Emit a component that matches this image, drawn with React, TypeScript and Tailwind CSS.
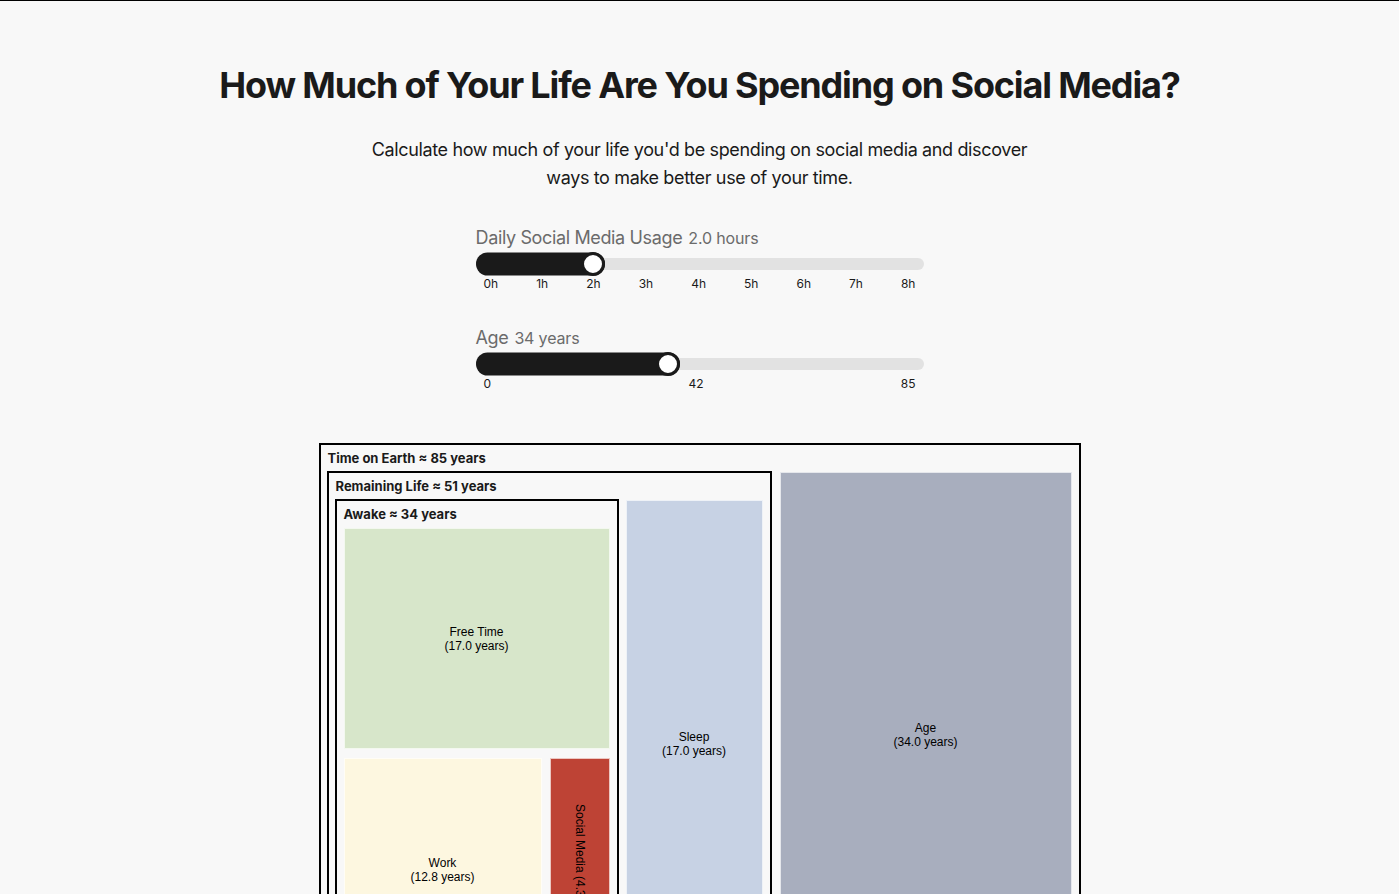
import React from "react";

const THUMB = 24;
const TRACK_W = 448;

function Slider({
  label,
  value,
  pct,
  ticks,
}: {
  label: string;
  value: string;
  pct: number;
  ticks: string[];
}) {
  // thumb centre, as a native range input would place it
  const center = THUMB / 2 - 1 + pct * (TRACK_W - THUMB + 2);
  return (
    <div className="flex flex-col">
      <div className="flex h-7 items-baseline gap-1.5 text-[#6b6b6b]">
        <span className="text-lg tracking-[-0.02em]">{label}</span>
        <span className="text-base tracking-[-0.01em]">{value}</span>
      </div>
      <div className="relative flex h-6 items-center">
        <div className="h-3 w-full rounded-full bg-[#e2e2e2]"></div>
        <div
          className="absolute left-0 top-1/2 h-[23px] -translate-y-1/2 rounded-full bg-[#1a1a1a]"
          style={{ width: center + 12 }}
        ></div>
        <div
          className="absolute top-0 h-6 w-6 -translate-x-1/2 rounded-full border-[3px] border-[#1a1a1a] bg-white"
          style={{ left: center }}
        ></div>
      </div>
      <div className="flex justify-between px-2 text-xs leading-4 text-[#1a1a1a]">
        {ticks.map((t) => (
          <span key={t}>{t}</span>
        ))}
      </div>
    </div>
  );
}

function Leaf({
  name,
  years,
  color,
  className,
  vertical,
}: {
  name: string;
  years: string;
  color: string;
  className: string;
  vertical?: boolean;
}) {
  return (
    <div
      className={`flex shrink-0 items-center justify-center border border-white/70 text-center text-xs leading-[14px] text-black ${color} ${className}`}
      style={{ fontFamily: '"Liberation Sans", Arial, sans-serif' }}
    >
      {vertical ? (
        <span className="whitespace-nowrap [writing-mode:vertical-rl]">
          {name} ({years})
        </span>
      ) : (
        <span>
          {name}
          <br />({years})
        </span>
      )}
    </div>
  );
}

export default function App() {
  return (
    <div
      className="min-h-screen border-t border-black bg-[#f8f8f8] text-[#1a1a1a]"
      style={{ fontFamily: "Inter, 'Liberation Sans', sans-serif" }}
    >
      <div className="flex flex-col items-center pt-16">
        <h1 className="text-4xl leading-10 font-bold tracking-[-0.032em] text-[#1a1a1a]">
          How Much of Your Life Are You Spending on Social Media?
        </h1>
        <p className="mt-[31px] max-w-2xl text-center text-lg leading-7 tracking-[-0.02em]">
          Calculate how much of your life you'd be spending on social media and
          discover ways to make better use of your time.
        </p>

        <div className="mt-[32px] flex w-[448px] flex-col gap-8">
          <Slider
            label="Daily Social Media Usage"
            value="2.0 hours"
            pct={2 / 8}
            ticks={["0h", "1h", "2h", "3h", "4h", "5h", "6h", "7h", "8h"]}
          />
          <Slider label="Age" value="34 years" pct={34 / 80} ticks={["0", "42", "85"]} />
        </div>

        {/* Treemap */}
        <div className="mt-[51px] flex w-[762px] flex-col border-2 border-black pb-[7px]">
          <div className="flex h-[26px] items-center pl-[7px] pt-px text-[13px] font-bold">
            Time on Earth ≈ 85 years
          </div>
          <div className="flex items-start gap-2 px-[6px]">
            <div className="flex w-[445px] shrink-0 flex-col border-2 border-black pb-[7px]">
              <div className="flex h-[26px] items-center pl-[7px] pt-px text-[13px] font-bold">
                Remaining Life ≈ 51 years
              </div>
              <div className="flex items-start gap-[7px] px-[6px]">
                <div className="flex w-[284px] shrink-0 flex-col border-2 border-black px-[7px] pb-[7px]">
                  <div className="flex h-[27px] items-center text-[13px] font-bold">
                    Awake ≈ 34 years
                  </div>
                  <Leaf
                    name="Free Time"
                    years="17.0 years"
                    color="bg-[#d7e6ca]"
                    className="h-[221px] w-full"
                  />
                  <div className="mt-[9px] flex gap-2">
                    <Leaf
                      name="Work"
                      years="12.8 years"
                      color="bg-[#fdf7e0]"
                      className="h-[222px] w-[198px] items-end pb-[95px]"
                    />
                    <Leaf
                      name="Social Media"
                      years="4.3 years"
                      color="bg-[#be4335]"
                      className="h-[222px] w-[60px]"
                      vertical
                    />
                  </div>
                </div>
                <Leaf
                  name="Sleep"
                  years="17.0 years"
                  color="bg-[#c7d2e4]"
                  className="mt-px h-[488px] w-[137px]"
                />
              </div>
            </div>
            <Leaf
              name="Age"
              years="34.0 years"
              color="bg-[#a8aebe]"
              className="mt-px h-[526px] w-[292px]"
            />
          </div>
        </div>
        <div className="h-16"></div>
      </div>
    </div>
  );
}
